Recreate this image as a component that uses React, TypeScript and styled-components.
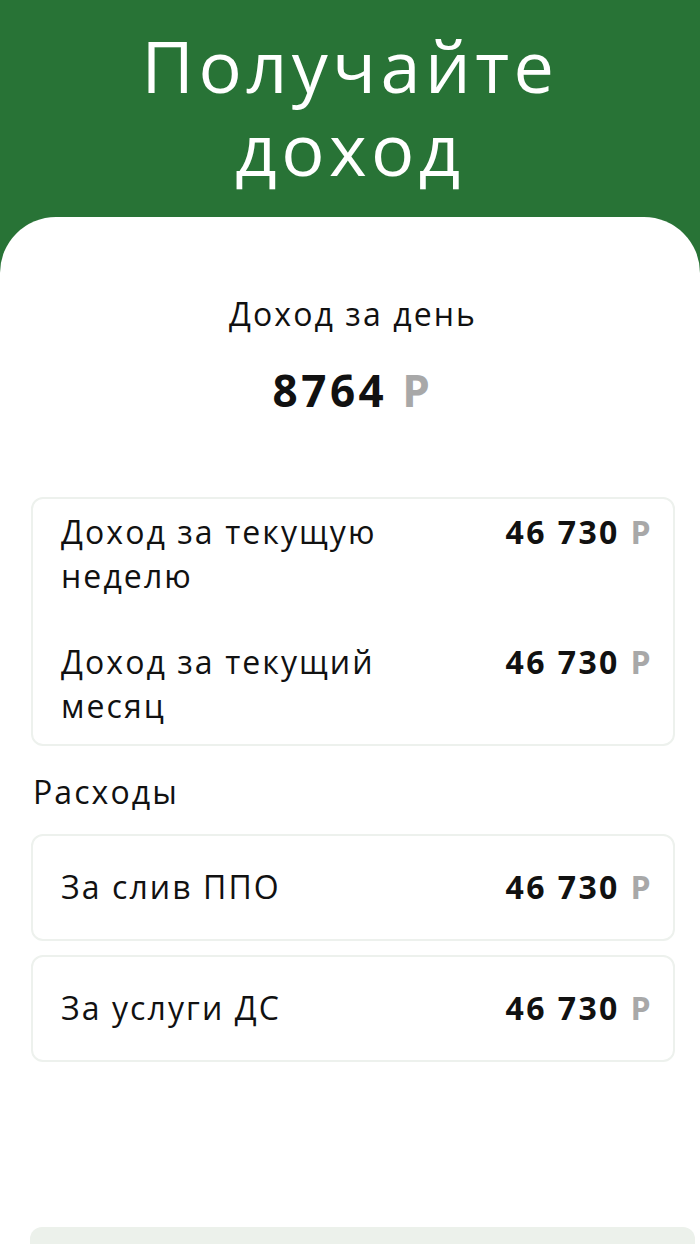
import React from "react";
import styled, { createGlobalStyle } from "styled-components";

const colorGreen = "#287336";
const colorBorder = "#edf1ed";

const GlobalStyle = createGlobalStyle`
  body {
    margin: 0;
    font-family: "Open Sans", "Noto Sans", "Liberation Sans", sans-serif;
    color: #111;
  }
`;

const Page = styled.div`
  min-height: 100vh;
  display: flex;
  flex-direction: column;
  background-color: ${colorGreen};
`;

const Hero = styled.h1`
  margin: 0;
  height: 217px;
  box-sizing: border-box;
  padding-top: 24px;
  color: #fff;
  font-size: 72px;
  font-weight: 400;
  line-height: 83px;
  letter-spacing: 0.062em;
  text-align: center;
`;

const Panel = styled.div`
  flex: 1;
  display: flex;
  flex-direction: column;
  background-color: #fff;
  border-radius: 56px 56px 0 0;
  padding: 0 25px 0 31px;
`;

const DaySummary = styled.div`
  display: flex;
  flex-direction: column;
  align-items: center;
  padding-top: 75px;
  margin-bottom: 81px;
`;

const DayLabel = styled.div`
  font-size: 32px;
  line-height: 44px;
  letter-spacing: 0.065em;
`;

const DayValue = styled.div`
  margin-top: 28px;
  font-size: 44px;
  font-weight: 700;
  line-height: 52px;
  letter-spacing: 0.08em;
`;

const Currency = styled.span`
  color: #a8a8a8;
`;

const Card = styled.div<{ $compact?: boolean }>`
  display: flex;
  flex-direction: column;
  gap: 42px;
  border: 2px solid ${colorBorder};
  border-radius: 12px;
  padding: ${({ $compact }) =>
    $compact ? "29px 20px 30px 28px" : "11px 20px 16px 28px"};
`;

const Row = styled.div`
  display: flex;
  justify-content: space-between;
  align-items: flex-start;
  gap: 20px;
`;

const Label = styled.div`
  font-size: 32px;
  line-height: 44px;
  letter-spacing: 0.065em;
  max-width: 340px;
`;

const Amount = styled.div`
  font-size: 32px;
  font-weight: 700;
  line-height: 44px;
  letter-spacing: 0.075em;
  white-space: nowrap;
`;

const SectionTitle = styled.div`
  font-size: 32px;
  line-height: 44px;
  letter-spacing: 0.065em;
  margin: 24px 0 20px 2px;
`;

const CardList = styled.div`
  display: flex;
  flex-direction: column;
  gap: 14px;
`;

const BottomBar = styled.div`
  margin: 165px -20px 0 -1px;
  height: 80px;
  border-radius: 12px 12px 0 0;
  background-color: #ecf1eb;
`;

type Item = {
  readonly label: string;
  readonly amount: string;
};

const income: Item[] = [
  { label: "Доход за текущую неделю", amount: "46 730" },
  { label: "Доход за текущий месяц", amount: "46 730" },
];

const expenses: Item[] = [
  { label: "За слив ППО", amount: "46 730" },
  { label: "За услуги ДС", amount: "46 730" },
];

const Money = ({ value }: { value: string }) => (
  <Amount>
    {value} <Currency>Р</Currency>
  </Amount>
);

const App = () => {
  return (
    <>
      <GlobalStyle />
      <Page>
        <Hero>
          Получайте
          <br />
          доход
        </Hero>
        <Panel>
          <DaySummary>
            <DayLabel>Доход за день</DayLabel>
            <DayValue>
              8764 <Currency>Р</Currency>
            </DayValue>
          </DaySummary>
          <Card>
            {income.map((item) => (
              <Row key={item.label}>
                <Label>{item.label}</Label>
                <Money value={item.amount} />
              </Row>
            ))}
          </Card>
          <SectionTitle>Расходы</SectionTitle>
          <CardList>
            {expenses.map((item) => (
              <Card $compact key={item.label}>
                <Row>
                  <Label>{item.label}</Label>
                  <Money value={item.amount} />
                </Row>
              </Card>
            ))}
          </CardList>
          <BottomBar />
        </Panel>
      </Page>
    </>
  );
};

export default App;
